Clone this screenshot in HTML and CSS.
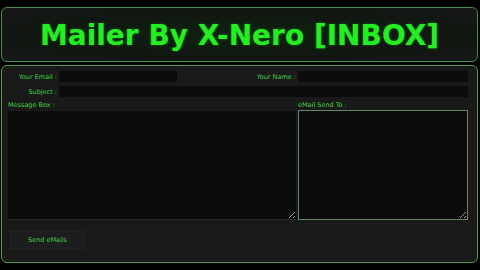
FILE: index.html
```html
<!DOCTYPE html>
<html lang="en">

<head>
  <meta charset="UTF-8" />
  <title>Mailer By X-Nero [INBOX]</title>
  <link rel="stylesheet" href="styles.css">
</head>

<body>
  <div class="header">
    <h1>Mailer By X-Nero [INBOX]</h1>
  </div>

  <form class="panel">
    <div class="row">
      <label class="label">Your Email :</label>
      <input type="text" class="field email-field" />
      <label class="label name-label">Your Name :</label>
      <input type="text" class="field name-field" />
    </div>
    <div class="row">
      <label class="label">Subject :</label>
      <input type="text" class="field subject-field" />
    </div>
    <div class="boxes">
      <div class="box message-box">
        <label class="box-label">Message Box :</label>
        <textarea class="area"></textarea>
      </div>
      <div class="box send-box">
        <label class="box-label">eMail Send To :</label>
        <textarea class="area area-focus"></textarea>
      </div>
    </div>
    <button type="button" class="send-button">Send eMails</button>
  </form>
</body>

</html>
```

FILE: styles.css
```css
body {
  margin: 0;
  background: #000;
  font-family: "DejaVu Sans", Verdana, sans-serif;
  width: 480px;
  height: 270px;
  overflow: hidden;
}

.header {
  margin: 7px 2px 0 1px;
  height: 53px;
  border: 1px solid #4a8a4a;
  border-radius: 6px;
  background: radial-gradient(ellipse at center, #0f220f 0%, #111611 60%, #161816 100%);
  display: flex;
  align-items: center;
  justify-content: center;
}

h1 {
  margin: 1px 0 0;
  font-size: 28px;
  font-weight: bold;
  color: #22ee22;
  text-shadow: 0 0 3px rgba(40, 220, 40, 0.35);
}

.panel {
  margin: 3px 2px 0 1px;
  height: 198px;
  border: 1px solid #4c9a4c;
  border-radius: 6px;
  background: #191919;
  padding: 5px 9px 0 6px;
  box-sizing: border-box;
}

.row {
  display: flex;
  align-items: center;
  height: 11px;
  margin-bottom: 4px;
}

.label {
  width: 49px;
  text-align: right;
  font-size: 6.5px;
  color: #44d044;
  padding-right: 2px;
  white-space: nowrap;
}

.name-label {
  width: auto;
  flex: 1;
}

.field {
  height: 11px;
  border: none;
  background: #0b0b0b;
  padding: 0;
  margin: 0;
  outline: none;
}

.email-field {
  width: 118px;
}

.name-field {
  width: 170px;
}

.subject-field {
  flex: 1;
}

.boxes {
  display: flex;
  gap: 2px;
  margin-top: 3px;
}

.box {
  display: flex;
  flex-direction: column;
}

.message-box {
  width: 289px;
}

.send-box {
  width: 170px;
}

.box-label {
  font-size: 6.5px;
  color: #44d044;
  height: 9px;
  line-height: 9px;
  margin-bottom: 1px;
}

.area {
  height: 109px;
  border: none;
  border-bottom: 1px solid #2a2a2a;
  background: #0b0b0b;
  resize: both;
  margin: 0;
  padding: 0;
  outline: none;
  box-sizing: border-box;
}

.area-focus {
  margin-top: -1px;
  height: 110px;
  border: 1px solid #5f8a5f;
}

.send-button {
  margin: 11px 0 0 2px;
  width: 75px;
  height: 18px;
  background: #1d1d1d;
  border: 1px solid #222;
  color: #44d044;
  font-family: "DejaVu Sans", Verdana, sans-serif;
  font-size: 6.5px;
  padding: 0;
}
```
